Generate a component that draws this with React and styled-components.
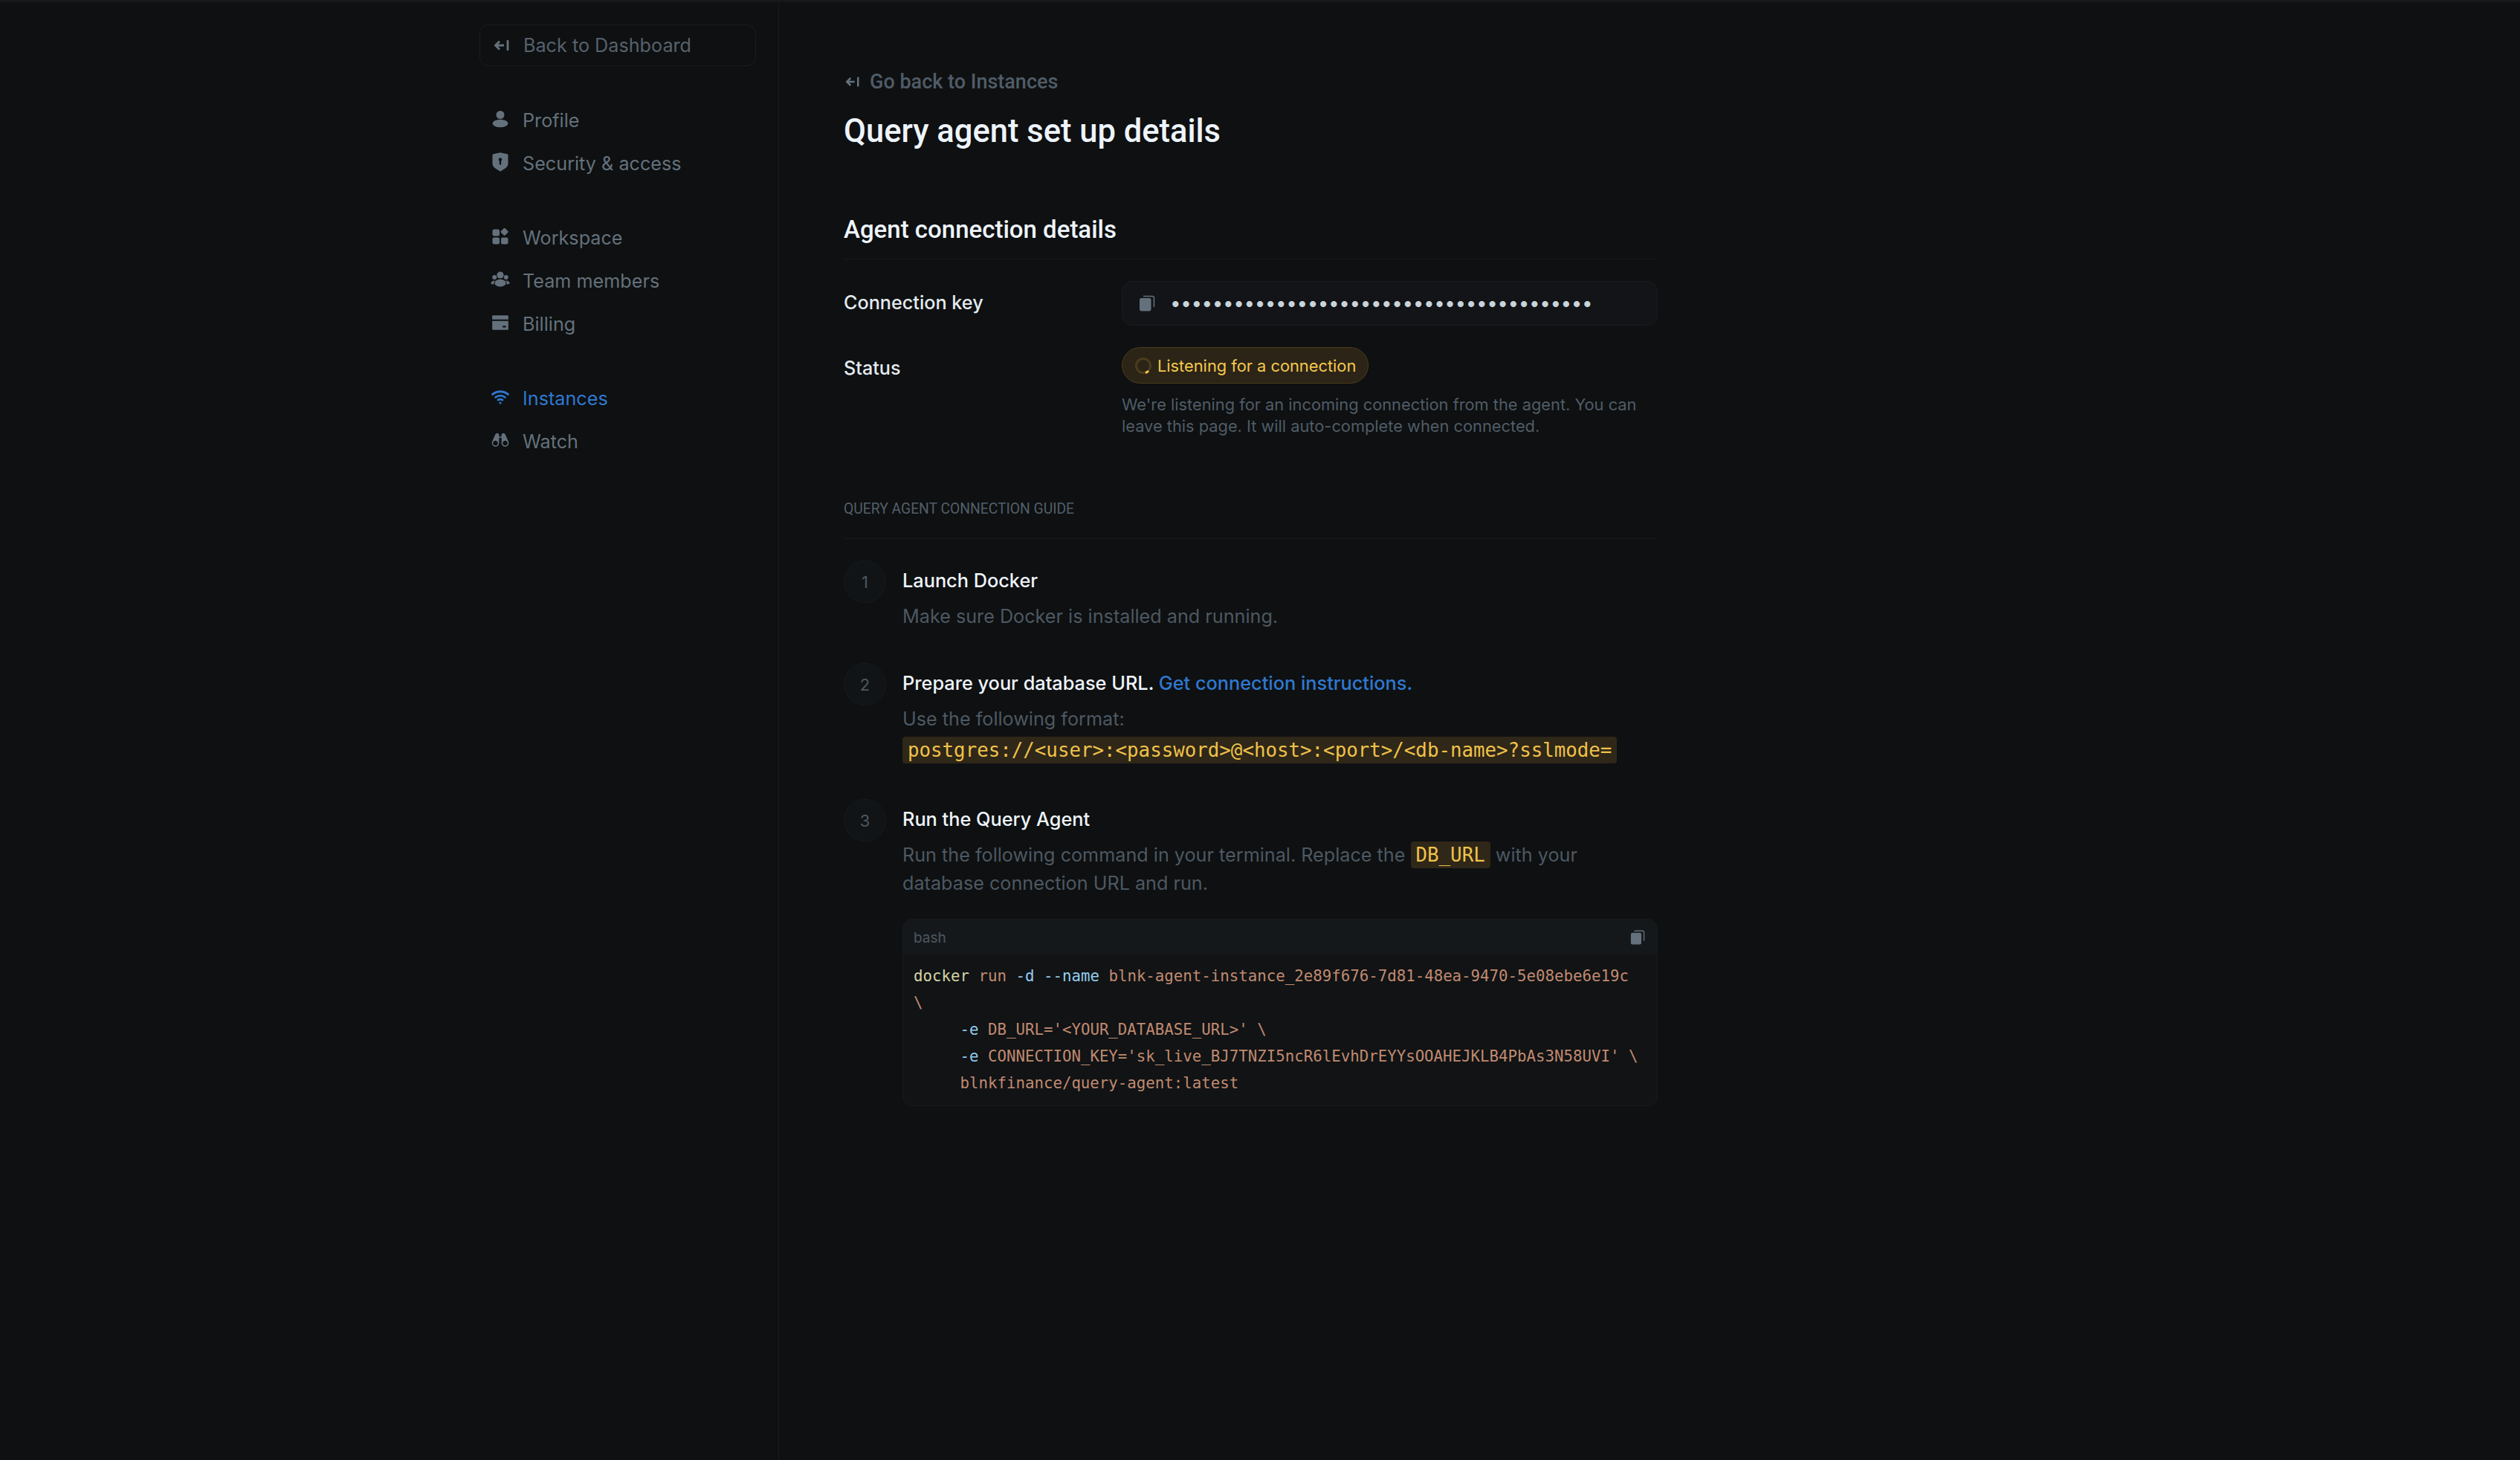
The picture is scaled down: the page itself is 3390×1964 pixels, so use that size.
import React from 'react';
import styled, { createGlobalStyle } from 'styled-components';
import { RiShieldKeyholeFill, RiBankCardFill } from 'react-icons/ri';
import { PiBinocularsFill } from 'react-icons/pi';

const GlobalStyle = createGlobalStyle`
  * { box-sizing: border-box; }
  html, body {
    margin: 0;
    background: #0e1011;
    font-family: Inter, "Liberation Sans", sans-serif;
  }
`;

const Page = styled.div`
  min-height: 1964px;
  border-top: 3px solid #16191b;
  background: #0e1011;
`;

const Shell = styled.div`
  width: 2100px;
  margin: 0 auto;
  display: flex;
  align-items: stretch;
  min-height: 1961px;
`;

const Sidebar = styled.aside`
  width: 403px;
  flex-shrink: 0;
  padding: 30px 30px 0 0;
  border-right: 1px solid #191c1e;
`;

const BackButton = styled.a`
  display: flex;
  align-items: center;
  gap: 18px;
  height: 56px;
  padding-left: 18px;
  border: 1px solid #1a1d20;
  border-radius: 12px;
  color: #56626d;
  font-size: 25.2px;
`;

const NavGroup = styled.nav`
  display: flex;
  flex-direction: column;
  gap: 22px;
  margin-top: ${(p) => p.$top || 64}px;
`;

const NavItem = styled.a`
  display: flex;
  align-items: center;
  height: 36px;
  padding-left: 16px;
  gap: 18px;
  font-size: 25.2px;
  color: ${(p) => (p.$active ? '#2f78d0' : '#64717c')};
`;

const NavIcon = styled.span`
  width: 24px;
  height: 24px;
  margin-top: -4px;
  display: flex;
  align-items: center;
  justify-content: center;
  flex-shrink: 0;
  svg {
    display: block;
    flex-shrink: 0;
  }
`;

const Main = styled.main`
  width: 1182px;
  padding: 91px 0 0 87px;
`;

const GoBack = styled.a`
  display: flex;
  align-items: center;
  gap: 13px;
  height: 32px;
  padding-left: 2px;
  color: #505c67;
  font-family: Roboto, Inter, sans-serif;
  font-weight: 500;
  font-size: 27px;
`;

const Title = styled.h1`
  margin: 23px 0 0;
  font-family: Roboto, Inter, sans-serif;
  font-weight: 500;
  font-size: 43.5px;
  line-height: 56px;
  color: #eef4fb;
`;

const SectionHead = styled.h2`
  margin: 84px 0 0;
  padding-bottom: 19px;
  border-bottom: 1px solid #181b1d;
  font-family: Roboto, Inter, sans-serif;
  font-weight: 500;
  font-size: 33px;
  line-height: 40px;
  color: #eef4fb;
`;

const FieldRow = styled.div`
  display: grid;
  grid-template-columns: 374px minmax(0, 1fr);
  margin-top: ${(p) => p.$top}px;
`;

const FieldLabel = styled.div`
  font-size: 25.2px;
  font-weight: 500;
  line-height: 32px;
  padding-top: ${(p) => p.$pad || 0}px;
  color: #e4eaf0;
`;

const KeyBox = styled.div`
  display: flex;
  align-items: center;
  gap: 20px;
  height: 60px;
  padding-left: 22px;
  background: #121417;
  border: 1px solid #1a1d20;
  border-radius: 14px;
`;

const KeyDots = styled.span`
  color: #c9d3da;
  font-size: 26px;
  letter-spacing: -0.42px;
  line-height: 1;
  white-space: nowrap;
`;

const StatusBadge = styled.div`
  display: inline-flex;
  align-items: center;
  gap: 7px;
  height: 49px;
  padding: 0 16px;
  border: 1px solid #4c3d1c;
  border-radius: 25px;
  background: #2b2417;
  color: #f5c84c;
  font-size: 21.8px;
`;

const Spinner = styled.svg`
  width: 24px;
  height: 24px;
  flex-shrink: 0;
`;

const Hint = styled.p`
  margin: 14px 0 0;
  font-size: 21.8px;
  line-height: 29px;
  color: #505c67;
`;

const GuideHead = styled.div`
  margin-top: 85px;
  padding-bottom: 27px;
  border-bottom: 1px solid #181b1d;
  font-family: Roboto, Inter, sans-serif;
  font-size: 19.3px;
  line-height: 24px;
  text-transform: uppercase;
  color: #525e69;
`;

const Steps = styled.div`
  display: flex;
  flex-direction: column;
  margin-top: 29px;
`;

const Step = styled.div`
  display: grid;
  grid-template-columns: 57px minmax(0, 1fr);
  column-gap: 22px;
  margin-bottom: ${(p) => p.$bottom || 0}px;
`;

const StepNum = styled.div`
  width: 57px;
  height: 57px;
  display: flex;
  align-items: center;
  justify-content: center;
  border: 1px solid #181b1e;
  border-radius: 50%;
  background: #111416;
  color: #4d5862;
  font-size: 22px;
`;

const StepBody = styled.div`
  padding-top: 8px;
`;

const StepTitle = styled.div`
  font-size: 25.3px;
  font-weight: 500;
  line-height: 38px;
  color: #eef4fb;
`;

const StepLink = styled.a`
  color: #2f78d0;
`;

const StepText = styled.div`
  margin-top: 10px;
  font-size: 25.2px;
  line-height: 38px;
  color: #4d5862;
`;

const Mark = styled.code`
  padding: 3px 7px;
  border-radius: 4px;
  background: #2f2718;
  color: #f0c24a;
  font-family: "DejaVu Sans Mono", "Liberation Mono", monospace;
  font-size: 25.8px;
`;

const FormatLine = styled.div`
  margin-top: 5px;
  line-height: 37px;
  white-space: nowrap;
`;

const CodeBlock = styled.div`
  margin-top: 29px;
  border: 1px solid #181b1e;
  border-radius: 12px;
  background: #111315;
  overflow: hidden;
`;

const CodeHeader = styled.div`
  display: flex;
  align-items: center;
  justify-content: space-between;
  height: 48px;
  padding: 0 16px 0 14px;
  background: #15181b;
  color: #4d5862;
  font-size: 19px;
`;

const CodeBody = styled.pre`
  margin: 0;
  padding: 10px 16px 12px 14px;
  font-family: "DejaVu Sans Mono", "Liberation Mono", monospace;
  font-size: 20.75px;
  line-height: 36px;
  white-space: pre-wrap;
  color: #c08a70;
`;

const Fn = styled.span`
  color: #d4d4a4;
`;

const Flag = styled.span`
  color: #93cdf0;
`;

const ArrowIcon = ({ size = 22 }) => (
  <svg width={size} height={size} viewBox="0 0 22 22" fill="none" stroke="#64717c" strokeWidth="2.8">
    <path d="M2 11h12M8 5.5 2.5 11 8 16.5" />
    <path d="M19 4v14" />
  </svg>
);

const UserIcon = () => (
  <svg width="22" height="24" viewBox="0 0 22 24" fill="#64717c">
    <circle cx="11" cy="6.5" r="5.5" />
    <ellipse cx="11" cy="18" rx="10.5" ry="5.2" />
  </svg>
);

const WorkspaceIcon = () => (
  <svg width="22" height="22" viewBox="0 0 22 22" fill="#64717c">
    <rect x="0.5" y="1.5" width="9.5" height="9" rx="2" />
    <rect x="0.5" y="12.5" width="9.5" height="9" rx="2" />
    <rect x="12" y="12.5" width="9.5" height="9" rx="2" />
    <rect x="12.6" y="0.8" width="8" height="8" rx="1.6" transform="rotate(45 16.6 4.8)" />
  </svg>
);

const TeamIcon = () => (
  <svg width="26" height="22" viewBox="0 0 26 22" fill="#64717c">
    <circle cx="13" cy="5" r="4.6" />
    <circle cx="5.2" cy="8" r="3" />
    <circle cx="20.8" cy="8" r="3" />
    <ellipse cx="13" cy="15.8" rx="7.6" ry="5" />
    <path d="M4.6 12.4C2 13 .4 14.6.2 16.2c1 .9 2.6 1.4 4.2 1.5-.2-2 .2-3.8 1.4-5.3h-1.2ZM21.4 12.4c2.6.6 4.2 2.2 4.4 3.8-1 .9-2.6 1.4-4.2 1.5.2-2-.2-3.8-1.4-5.3h1.2Z" />
  </svg>
);

const WifiIcon = () => (
  <svg width="24" height="22" viewBox="0 0 24 22" fill="none" stroke="#2f78d0" strokeWidth="2.8" strokeLinecap="round">
    <path d="M1.5 7.5c6-5 15-5 21 0" />
    <path d="M5.5 11.5c4-3 9-3 13 0" />
    <path d="M9 15c2-1.2 4-1.2 6 0" />
    <circle cx="12" cy="19" r="1.6" fill="#2f78d0" stroke="none" />
  </svg>
);

const CopyIcon = ({ size = 22 }) => (
  <svg width={size} height={size} viewBox="0 0 22 22" fill="none">
    <path d="M6 1.4h12.4a2 2 0 0 1 2 2V16" stroke="#64717c" strokeWidth="1.5" />
    <rect x="1" y="4" width="15.5" height="17.5" rx="2.4" fill="#64717c" />
  </svg>
);

export default function App() {
  return (
    <Page>
      <GlobalStyle />
      <Shell>
        <Sidebar>
          <BackButton>
            <ArrowIcon />
            Back to Dashboard
          </BackButton>
          <NavGroup $top={55}>
            <NavItem>
              <NavIcon><UserIcon /></NavIcon>
              Profile
            </NavItem>
            <NavItem>
              <NavIcon><RiShieldKeyholeFill size={28} color="#64717c" /></NavIcon>
              Security &amp; access
            </NavItem>
          </NavGroup>
          <NavGroup>
            <NavItem>
              <NavIcon><WorkspaceIcon /></NavIcon>
              Workspace
            </NavItem>
            <NavItem>
              <NavIcon><TeamIcon /></NavIcon>
              Team members
            </NavItem>
            <NavItem>
              <NavIcon><RiBankCardFill size={26} color="#64717c" /></NavIcon>
              Billing
            </NavItem>
          </NavGroup>
          <NavGroup>
            <NavItem $active>
              <NavIcon><WifiIcon /></NavIcon>
              Instances
            </NavItem>
            <NavItem>
              <NavIcon><PiBinocularsFill size={26} color="#64717c" /></NavIcon>
              Watch
            </NavItem>
          </NavGroup>
        </Sidebar>

        <Main>
          <GoBack>
            <ArrowIcon size={20} />
            Go back to Instances
          </GoBack>
          <Title>Query agent set up details</Title>

          <SectionHead>Agent connection details</SectionHead>
          <FieldRow $top={29}>
            <FieldLabel $pad={13}>Connection key</FieldLabel>
            <KeyBox>
              <CopyIcon />
              <KeyDots>{'•'.repeat(40)}</KeyDots>
            </KeyBox>
          </FieldRow>
          <FieldRow $top={29}>
            <FieldLabel $pad={12}>Status</FieldLabel>
            <div>
              <StatusBadge>
                <Spinner viewBox="0 0 24 24" fill="none" strokeWidth="3">
                  <circle cx="12" cy="12" r="9.5" stroke="#4c3d1c" />
                  <path d="M19 19a9.5 9.5 0 0 1-4 2.5" stroke="#f5c84c" />
                </Spinner>
                Listening for a connection
              </StatusBadge>
              <Hint>
                We're listening for an incoming connection from the agent. You can leave this page. It will auto-complete when connected.
              </Hint>
            </div>
          </FieldRow>

          <GuideHead>Query agent connection guide</GuideHead>
          <Steps>
            <Step $bottom={44}>
              <StepNum>1</StepNum>
              <StepBody>
                <StepTitle>Launch Docker</StepTitle>
                <StepText>Make sure Docker is installed and running.</StepText>
              </StepBody>
            </Step>
            <Step $bottom={47}>
              <StepNum>2</StepNum>
              <StepBody>
                <StepTitle>
                  Prepare your database URL. <StepLink>Get connection instructions.</StepLink>
                </StepTitle>
                <StepText>
                  Use the following format:
                  <FormatLine>
                    <Mark>{'postgres://<user>:<password>@<host>:<port>/<db-name>?sslmode='}</Mark>
                  </FormatLine>
                </StepText>
              </StepBody>
            </Step>
            <Step>
              <StepNum>3</StepNum>
              <StepBody>
                <StepTitle>Run the Query Agent</StepTitle>
                <StepText>
                  Run the following command in your terminal. Replace the <Mark>DB_URL</Mark> with your database connection URL and run.
                </StepText>
                <CodeBlock>
                  <CodeHeader>
                    bash
                    <CopyIcon size={20} />
                  </CodeHeader>
                  <CodeBody>
                    <Fn>docker</Fn> run <Flag>-d</Flag> <Flag>--name</Flag> blnk-agent-instance_2e89f676-7d81-48ea-9470-5e08ebe6e19c {'\\\n'}
                    {'     '}<Flag>-e</Flag> {"DB_URL='<YOUR_DATABASE_URL>' \\\n"}
                    {'     '}<Flag>-e</Flag> {"CONNECTION_KEY='sk_live_BJ7TNZI5ncR6lEvhDrEYYsOOAHEJKLB4PbAs3N58UVI' \\\n"}
                    {'     blnkfinance/query-agent:latest'}
                  </CodeBody>
                </CodeBlock>
              </StepBody>
            </Step>
          </Steps>
        </Main>
      </Shell>
    </Page>
  );
}
